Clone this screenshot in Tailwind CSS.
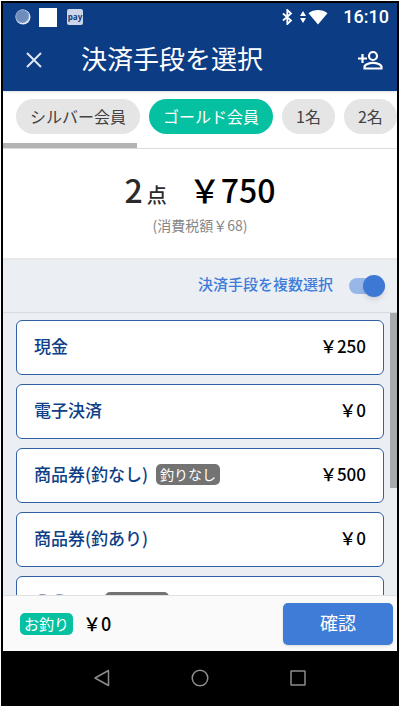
<!DOCTYPE html>
<html lang="ja">
<head>
<meta charset="utf-8">
<meta name="viewport" content="width=device-width, initial-scale=1">
<title>決済手段を選択</title>
<script src="https://cdn.jsdelivr.net/npm/@tailwindcss/browser@4"></script>
</head>
<body class="h-screen bg-white p-px font-['Noto_Sans_CJK_JP',sans-serif] text-black">
<div class="flex h-full flex-col overflow-hidden border-2 border-black">
  <header class="relative z-10 bg-[#0c3c84] text-white shadow">
    <div class="flex h-7 items-center pr-2 pl-3">
      <svg class="size-4" viewBox="0 0 16 16" aria-hidden="true"><circle cx="8" cy="8" r="7.5" fill="#e6ecf5"/><circle cx="7.300" cy="7.300" r="6.800" fill="#6f8dbc"/><circle cx="7.300" cy="7.300" r="6.300" fill="none" stroke="#a9bbd8" stroke-width="1" stroke-dasharray="1 1"/></svg>
      <span class="ml-2 h-[19px] w-[18px] bg-white"></span>
      <span class="ml-[10px] flex size-4 items-center justify-center rounded-xs bg-[#ccd6e6] font-['Open_Sans',sans-serif] text-[8px] leading-none font-bold text-[#0c3c84]">pay</span>
      <svg class="ml-auto h-4 w-[11px]" viewBox="0 0 11 16" fill="none" stroke="#fff" stroke-width="1.800" aria-hidden="true"><path d="M1 4.500l8 7L5.300 15V1L9 4.500l-8 7"/></svg>
      <svg class="ml-[7px] h-4 w-[6px]" viewBox="0 0 6 16" fill="#fff" aria-hidden="true"><path d="M3 2l3 5H0zM3 14L0 9h6z"/></svg>
      <svg class="ml-[2px] h-4 w-5" viewBox="0 0 20 16" fill="#fff" aria-hidden="true"><path d="M.5 4.200C6 0 14 0 19.500 4.200L10 15.500z"/></svg>
      <span class="ml-[15px] font-[Roboto,sans-serif] text-[18px] leading-7 font-medium">16:10</span>
    </div>
    <div class="flex h-[60px] items-center pr-[14px] pb-1">
      <button type="button" aria-label="閉じる" class="mt-[2px] ml-[22px] flex size-[18px] items-center justify-center">
        <svg class="size-[18px]" viewBox="0 0 18 18" fill="none" stroke="#dfe6f1" stroke-width="2"><path d="M2 2l14 14M16 2L2 16"/></svg>
      </button>
      <h1 class="ml-[38px] flex-1 pb-[2px] text-[26px] leading-9">決済手段を選択</h1>
      <button type="button" aria-label="会員を追加" class="mt-[2px]">
        <svg class="h-[20px] w-[26px]" viewBox="0 0 26 20" fill="none" stroke="#fff" stroke-width="2.200"><circle cx="16" cy="6" r="4"/><path d="M7.500 18.500v-1.500c0-2.600 5-4.100 8.500-4.100s8.500 1.500 8.500 4.100v1.500zM1 8.500h9M5.500 4v9"/></svg>
      </button>
    </div>
  </header>

  <nav aria-label="会員区分" class="border-b border-[#dcdcdc]">
    <div class="flex gap-[9px] overflow-hidden pt-2 pb-[9px] pl-[13px] text-[16px] leading-[35px] text-[#424242]">
      <button type="button" class="shrink-0 rounded-full bg-[#e5e5e5] px-[14px]">シルバー会員</button>
      <button type="button" aria-pressed="true" class="shrink-0 rounded-full bg-[#06c1a1] px-[14px] text-white">ゴールド会員</button>
      <button type="button" class="shrink-0 rounded-full bg-[#e5e5e5] px-[14px]">1名</button>
      <button type="button" class="shrink-0 rounded-full bg-[#e5e5e5] px-[14px]">2名</button>
    </div>
    <div class="h-[5px] w-[34%] bg-[#b4b4b4]"></div>
  </nav>

  <section class="flex h-[111px] flex-col items-center border-b-2 border-[#e8e8e8] pt-5">
    <p class="flex items-baseline leading-10 font-medium"><span class="text-[32px] text-[#2b2b2b]">2</span><span class="ml-1 text-[20px] text-[#2b2b2b]">点</span><span class="ml-[22px] text-[32px]">￥750</span></p>
    <p class="text-[14px] leading-5 text-[#868686]">(消費税額￥68)</p>
  </section>

  <main class="flex min-h-0 flex-1 flex-col bg-[#ebeff4]">
    <label class="flex h-[53px] shrink-0 items-center justify-end gap-4 border-b border-[#d7dbde] pr-3 text-[15px] font-medium text-[#3f7cd8]">
      <span class="pb-[3px]">決済手段を複数選択</span>
      <span class="relative flex h-6 w-9 items-center">
        <input type="checkbox" role="switch" checked class="peer absolute inset-0 z-10 opacity-0">
        <span class="h-4 w-full rounded-full bg-[#98b7e9]"></span>
        <span class="absolute right-0 size-[22px] rounded-full bg-[#3c78d4] shadow-md"></span>
      </span>
    </label>
    <div class="flex min-h-0 flex-1 overflow-hidden">
      <ul class="flex flex-1 flex-col gap-[9px] pt-[7px] pr-[6px] pl-[13px] text-[17px] leading-[26px] font-medium">
        <li><button type="button" class="flex h-[55px] w-full items-center rounded-md border border-[#2f5fa5] bg-white px-[17px] pb-[3px]"><span class="text-[#0e3f87]">現金</span><span class="ml-auto">￥250</span></button></li>
        <li><button type="button" class="flex h-[55px] w-full items-center rounded-md border border-[#2f5fa5] bg-white px-[17px] pb-[3px]"><span class="text-[#0e3f87]">電子決済</span><span class="ml-auto">￥0</span></button></li>
        <li><button type="button" class="flex h-[55px] w-full items-center rounded-md border border-[#2f5fa5] bg-white px-[17px] pb-[3px]"><span class="text-[#0e3f87]">商品券(釣なし)</span><span class="ml-2 rounded-[5px] bg-[#737373] px-1 text-[14px] leading-[21px] font-normal text-white">釣りなし</span><span class="ml-auto">￥500</span></button></li>
        <li><button type="button" class="flex h-[55px] w-full items-center rounded-md border border-[#2f5fa5] bg-white px-[17px] pb-[3px]"><span class="text-[#0e3f87]">商品券(釣あり)</span><span class="ml-auto">￥0</span></button></li>
        <li><button type="button" class="flex h-[55px] w-full items-center rounded-md border border-[#2f5fa5] bg-white px-[17px] pb-[3px]"><span class="text-[#0e3f87]">◯◯Pay</span><span class="ml-2 rounded-[5px] bg-[#737373] px-1 text-[14px] leading-[21px] font-normal text-white">釣りなし</span><span class="ml-auto">￥0</span></button></li>
      </ul>
      <div class="h-[62%] w-[7px] bg-[#a7abae]"></div>
    </div>
  </main>

  <footer class="flex h-[56px] shrink-0 items-center border-t border-[#e0e0e0] bg-[#fafafa] pr-1 pl-[17px]">
    <span class="rounded-[5px] bg-[#06c1a1] px-1 text-[15px] leading-[22px] text-white">お釣り</span>
    <span class="ml-[10px] text-[18px] font-medium">￥0</span>
    <button type="button" class="ml-auto h-[42px] w-[110px] rounded-[5px] bg-[#3f7cd8] pb-[2px] text-[18px] text-white shadow">確認</button>
  </footer>

  <nav aria-label="システム" class="flex h-[53px] shrink-0 items-center justify-center gap-[80px] bg-black">
    <button type="button" aria-label="戻る"><svg class="size-[18px]" viewBox="0 0 18 18" fill="none" stroke="#8c8c8c" stroke-width="1.500" stroke-linejoin="round"><path d="M15.500 1.500v15L2 9z"/></svg></button>
    <button type="button" aria-label="ホーム"><svg class="size-[18px]" viewBox="0 0 18 18" fill="none" stroke="#8c8c8c" stroke-width="1.500"><circle cx="9" cy="9" r="7.800"/></svg></button>
    <button type="button" aria-label="履歴"><svg class="size-[18px]" viewBox="0 0 18 18" fill="none" stroke="#8c8c8c" stroke-width="1.500"><rect x="2" y="2" width="14" height="14" rx=".5"/></svg></button>
  </nav>
</div>
</body>
</html>
